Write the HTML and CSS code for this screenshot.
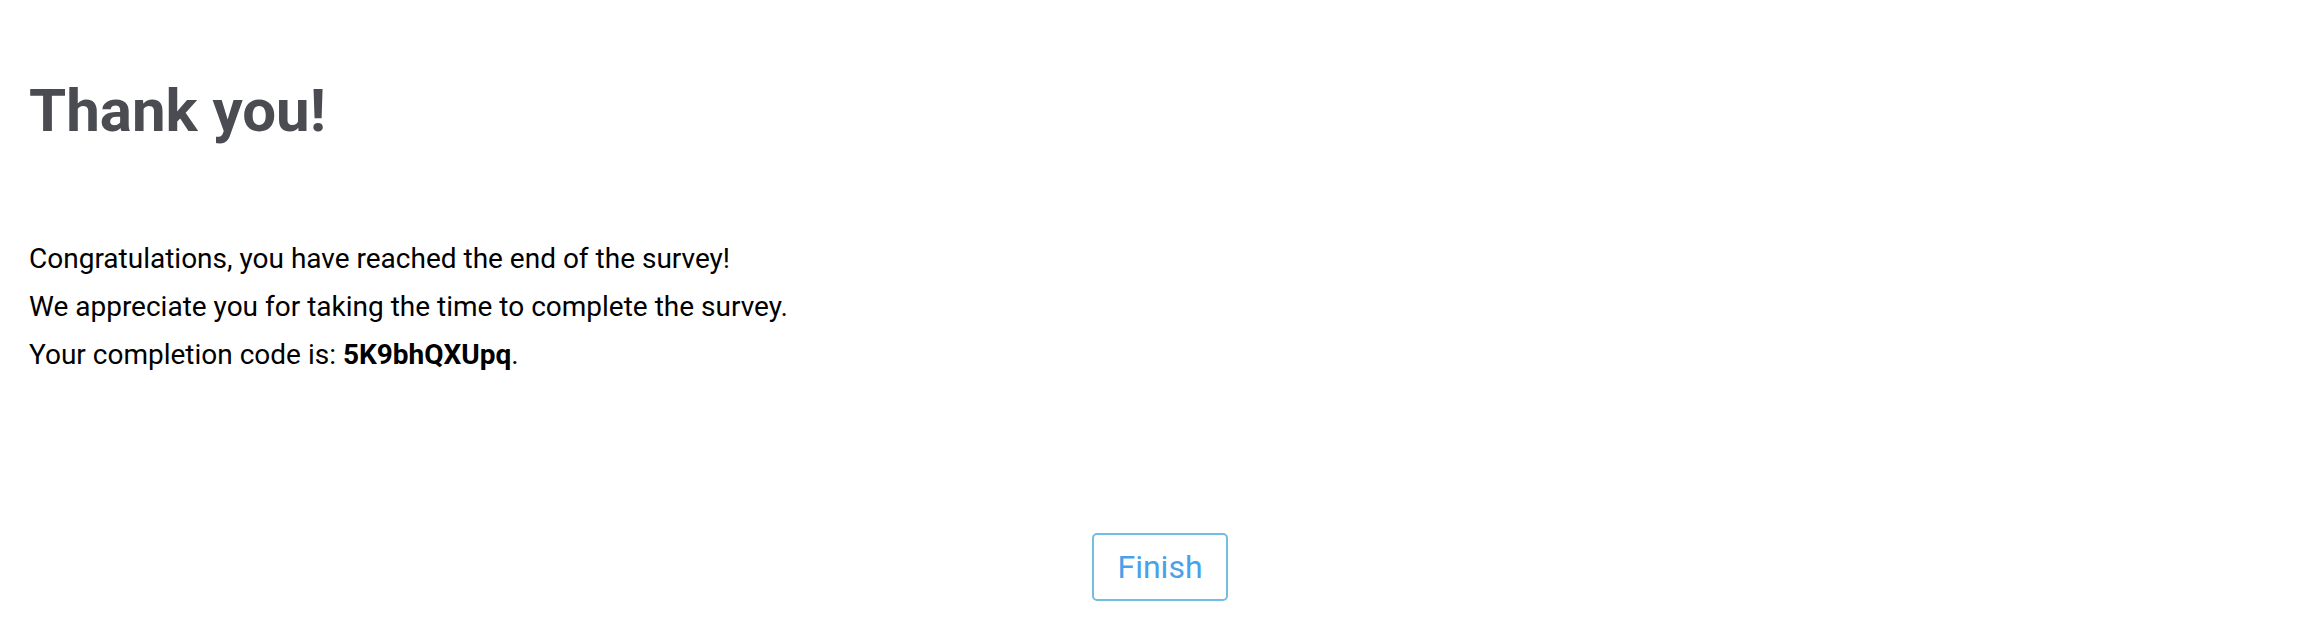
FILE: index.html
```html
<!DOCTYPE html>
<html lang="en">
<head>
<meta charset="utf-8">
<title>Thank you!</title>
<link rel="stylesheet" href="styles.css">
</head>
<body>
<main class="page">
  <h1 class="title">Thank you!</h1>
  <div class="message">
    <p>Congratulations, you have reached the end of the survey!</p>
    <p>We appreciate you for taking the time to complete the survey.</p>
    <p>Your completion code is: <strong>5K9bhQXUpq</strong>.</p>
  </div>
  <div class="actions">
    <button class="finish" type="button">Finish</button>
  </div>
</main>
</body>
</html>
```
FILE: styles.css
```css
html, body {
  margin: 0;
  padding: 0;
  background: #ffffff;
}
body {
  font-family: Roboto, "Liberation Sans", Arial, sans-serif;
  color: #000000;
}
.page {
  padding: 0 29px;
}
.title {
  margin: 0;
  padding-top: 69px;
  font-size: 60px;
  line-height: 84px;
  font-weight: 700;
  color: #4a4c51;
}
.message {
  margin-top: 82px;
  font-size: 28px;
  line-height: 48px;
}
.message p {
  margin: 0;
}
.message strong {
  font-weight: 700;
}
.actions {
  display: flex;
  justify-content: center;
  margin-top: 154px;
  padding-left: 18px;
}
.finish {
  font-family: Roboto, "Liberation Sans", Arial, sans-serif;
  font-size: 32px;
  color: #47a2ea;
  background: #ffffff;
  border: 2px solid #74bde2;
  border-radius: 5px;
  width: 136px;
  height: 68px;
  padding: 0;
  cursor: pointer;
}
```
